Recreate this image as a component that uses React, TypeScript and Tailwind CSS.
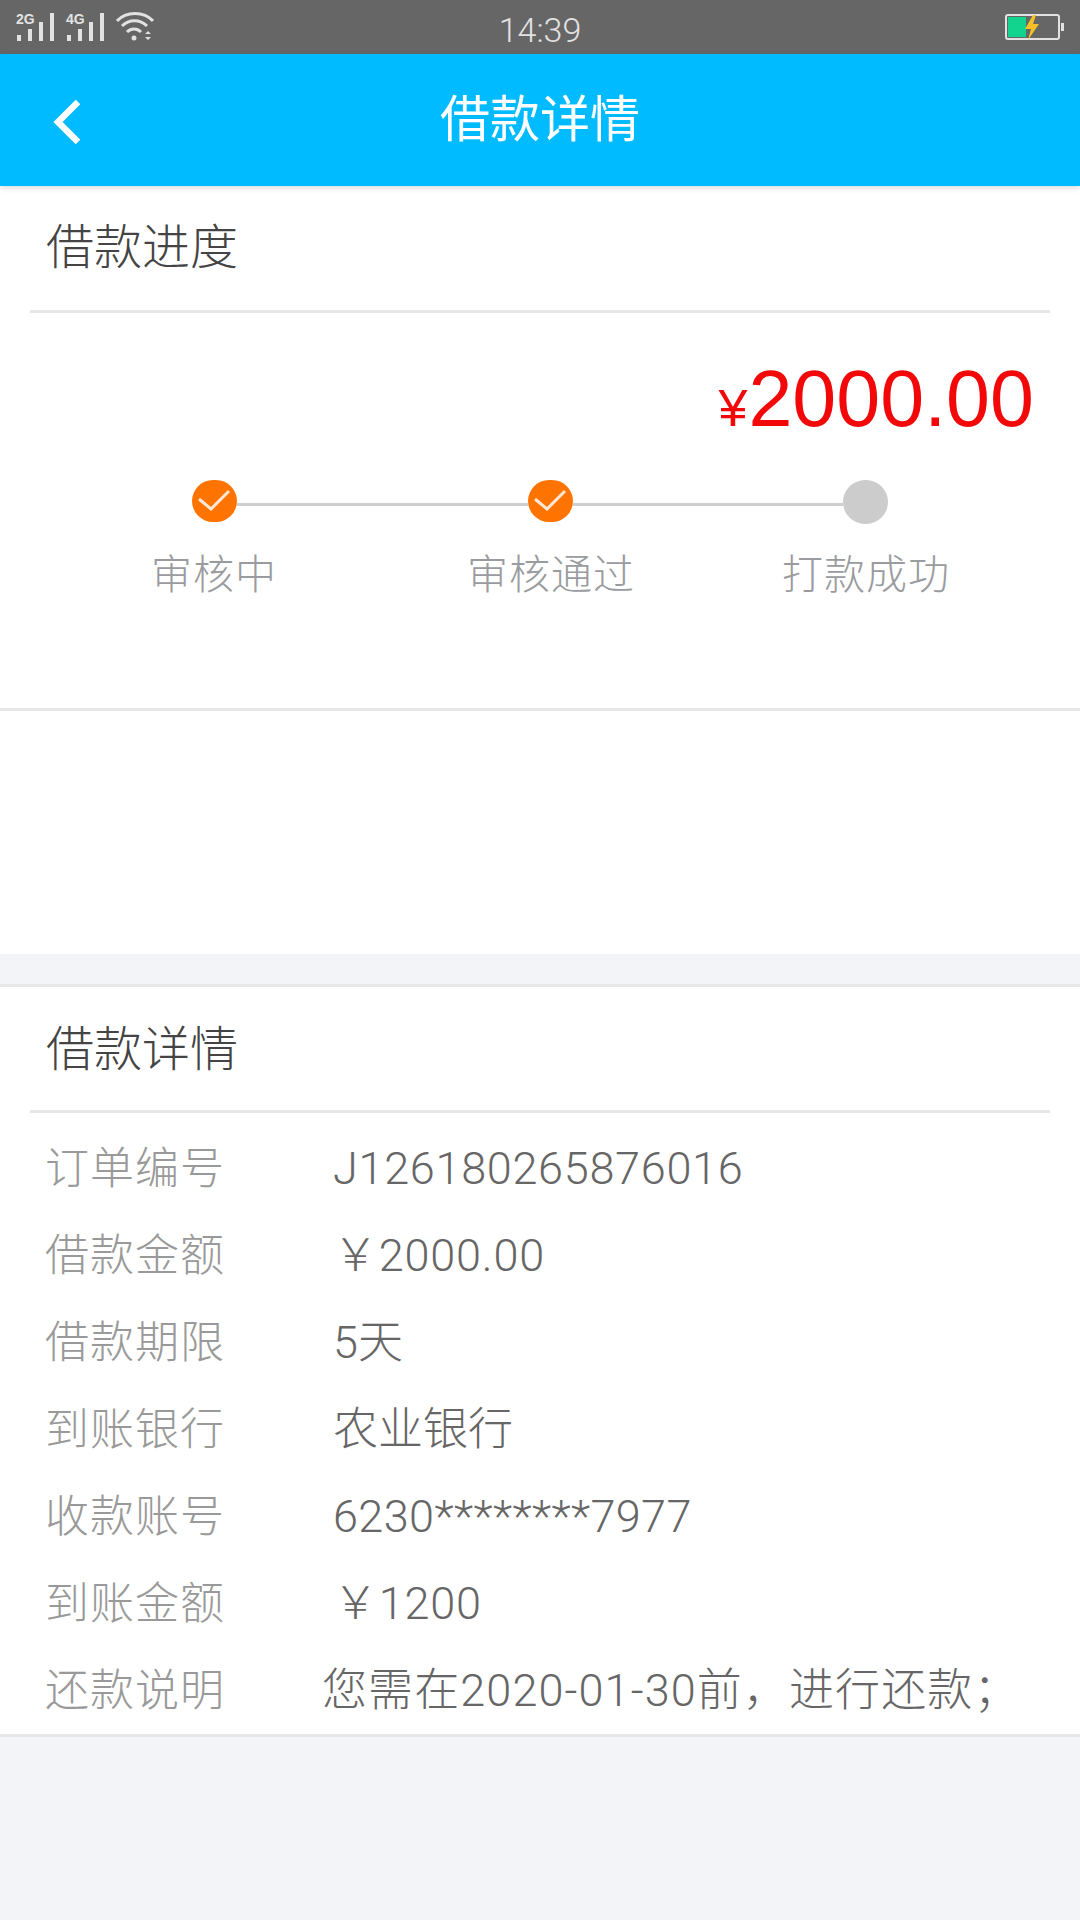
import React from "react";

const CJK = "font-['Roboto','Noto_Sans_CJK_SC',sans-serif]";

function Check() {
  return (
    <div className="w-[45px] h-[42px] rounded-full bg-[#ff7300] shrink-0">
      <svg width="45" height="42" viewBox="0 0 45 42" fill="none">
        <path d="M7 19 L19 29 L37 11" stroke="#ffe8d6" strokeWidth="3" />
      </svg>
    </div>
  );
}

function Signal({ label }: { label: string }) {
  return (
    <div className="relative w-[38px] h-[30px]">
      <span className="absolute left-[-1px] top-[0px] text-[14px] leading-[14px] font-bold text-[#e2e2e2] font-['Liberation_Sans',sans-serif]">{label}</span>
      <svg className="absolute left-0 top-0" width="38" height="30" viewBox="0 0 38 30" fill="#e2e2e2">
        <rect x="0" y="23" width="4" height="6" />
        <rect x="11" y="17" width="4" height="12" />
        <rect x="22" y="10" width="4" height="19" />
        <rect x="33" y="1" width="4" height="28" />
      </svg>
    </div>
  );
}

function Row({ k, v, vc = "" }: { k: string; v: string; vc?: string }) {
  return (
    <div className="flex items-center h-[87px]">
      <div className="w-[333px] pl-[45px] text-[#999999] text-[44px] font-light leading-none shrink-0 tracking-[1px]">{k}</div>
      <div className={`text-[#666666] text-[45px] font-light leading-none whitespace-nowrap ${vc}`}>{v}</div>
    </div>
  );
}

export default function App() {
  return (
    <div className={`w-[1080px] h-[1920px] bg-[#f3f4f8] overflow-hidden ${CJK}`}>
      <div className="h-[54px] bg-[#666666] flex items-center relative">
        <div className="flex items-center gap-[12px] pl-[17px]">
          <Signal label="2G" />
          <Signal label="4G" />
          <svg width="38" height="30" viewBox="0 0 38 30" fill="none" stroke="#e2e2e2" className="ml-[-1px]">
            <path d="M1 9 C10 -1 28 -1 37 9" strokeWidth="3" />
            <path d="M6 14 C13 7 24 7 31 14" strokeWidth="3" />
            <path d="M11 20 C15 16 21 16 25 20" strokeWidth="3" />
            <circle cx="18" cy="26" r="2.5" fill="#e2e2e2" stroke="none" />
            <path d="M29 22 L32 19 L35 22 Z M29 25 L35 25 L32 28 Z" fill="#e2e2e2" stroke="none" />
          </svg>
        </div>
        <div className="absolute left-0 right-0 top-[10px] text-center text-[34px] font-light leading-[40px] text-[#e2e2e2]">14:39</div>
        <div className="ml-auto mr-[16px] flex items-center">
          <div className="relative w-[55px] h-[26px] rounded-[3px] border-2 border-[#e2e2e2]">
            <div className="absolute left-0 top-0 bottom-0 w-[18px] bg-[#12d48f] m-[1px]" />
            <svg className="absolute left-[17px] top-[-1px]" width="16" height="25" viewBox="0 0 16 25">
              <path d="M9 0 L1 14 L7 14 L4 25 L15 9 L9 9 L12 0 Z" fill="#f6c026" />
            </svg>
          </div>
          <div className="w-[3px] h-[8px] bg-[#e2e2e2] ml-[1px]" />
        </div>
      </div>

      <div className="h-[132px] bg-[#00bbff] flex items-center justify-center relative shadow-[0_2px_6px_rgba(0,0,0,0.15)]">
        <svg className="absolute left-[50px] top-[44px]" width="34" height="48" viewBox="0 0 34 48" fill="none">
          <path d="M28 4 L8 24 L28 44" stroke="#ffffff" strokeWidth="6.5" />
        </svg>
        <div className="text-white text-[50px] leading-none">借款详情</div>
      </div>

      <div className="bg-white h-[768px] flex flex-col">
        <div className="h-[127px] mx-[30px] border-b-[3px] border-[#e7e7e9] flex items-center pl-[16px]">
          <span className="text-[#444444] text-[48px] font-light leading-none">借款进度</span>
        </div>
        <div className="h-[398px] border-b-[3px] border-[#e7e7e9]">
          <div className="flex justify-end pr-[46px] pt-[46px] h-[167px] items-baseline text-[#f20808]">
            <span className="text-[52px] leading-none font-['Liberation_Sans',sans-serif]">¥</span>
            <span className="text-[79px] leading-[80px] font-['Liberation_Sans',sans-serif] ml-[1px]">2000.00</span>
          </div>
          <div className="flex items-start pl-[192px]">
            <Check />
            <div className="w-[291px] h-[3px] bg-[#cfcfcf] mt-[23px]" />
            <Check />
            <div className="w-[270px] h-[3px] bg-[#cfcfcf] mt-[23px]" />
            <div className="w-[45px] h-[44px] rounded-full bg-[#cccccc] shrink-0" />
          </div>
          <div className="flex mt-[26px] text-[#999b9e] text-[41px] font-light leading-[50px] tracking-[1px] whitespace-nowrap">
            <div className="w-[200px] ml-[114px] text-center">审核中</div>
            <div className="w-[200px] ml-[137px] text-center">审核通过</div>
            <div className="w-[200px] ml-[115px] text-center">打款成功</div>
          </div>
        </div>
        <div className="flex-1" />
      </div>

      <div className="h-[33px] border-b-[3px] border-[#e7e7e9]" />

      <div className="bg-white border-b-[3px] border-[#e7e7e9]">
        <div className="h-[126px] mx-[30px] border-b-[3px] border-[#e7e7e9] flex items-center pl-[16px] pt-[2px]">
          <span className="text-[#444444] text-[48px] font-light leading-none">借款详情</span>
        </div>
        <div className="pt-[12px]">
          <Row k="订单编号" v="J126180265876016" vc="tracking-[0.7px]" />
          <Row k="借款金额" v="￥2000.00" vc="tracking-[0.8px]" />
          <Row k="借款期限" v="5天" />
          <Row k="到账银行" v="农业银行" />
          <Row k="收款账号" v="6230********7977" vc="tracking-[0.4px]" />
          <Row k="到账金额" v="￥1200" vc="tracking-[0.8px]" />
          <Row k="还款说明" v="您需在2020-01-30前，进行还款；" vc="ml-[-11px] tracking-[1.1px]" />
        </div>
      </div>
    </div>
  );
}
